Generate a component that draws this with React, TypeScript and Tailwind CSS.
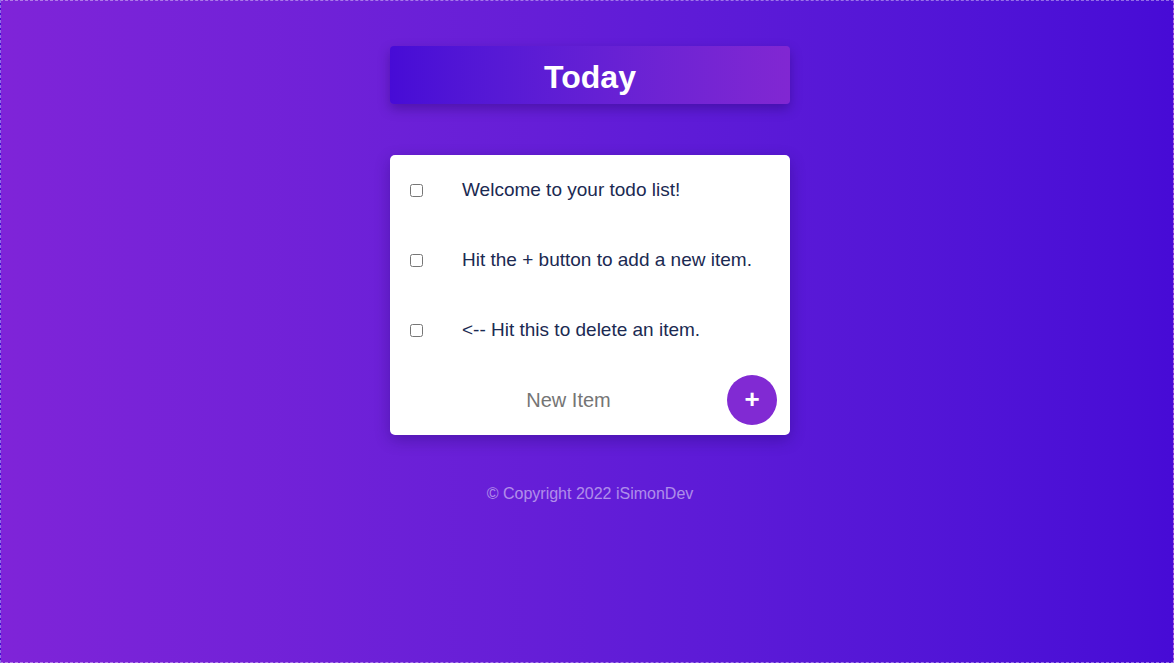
const items = [
  "Welcome to your todo list!",
  "Hit the + button to add a new item.",
  "<-- Hit this to delete an item.",
];

export default function App() {
  return (
    <div className="min-h-[663px] w-full border border-dashed border-white/40 bg-gradient-to-r from-[#7f24d8] to-[#470bd6] flex flex-col items-center pl-[6px] font-['Liberation_Sans',Arial,sans-serif]">
      <div className="mt-[45px] w-[400px] h-[58px] rounded bg-gradient-to-r from-[#470bd6] to-[#8127d2] shadow-[0_5px_12px_rgba(30,0,90,0.35)] flex items-center justify-center">
        <h1 className="text-white text-[32px] font-bold pt-[3px]">Today</h1>
      </div>

      <div className="mt-[51px] w-[400px] bg-white rounded-[5px] shadow-[0_5px_15px_rgba(20,0,80,0.3)]">
        {items.map((t) => (
          <div key={t} className="h-[70px] flex items-center">
            <div className="w-[72px] pl-[20px] flex items-center">
              <input type="checkbox" className="w-[13px] h-[13px]" />
            </div>
            <p className="text-[19px] text-[#1b2a52] font-light">{t}</p>
          </div>
        ))}
        <div className="h-[70px] flex items-center pl-[20px] pr-[13px]">
          <input
            type="text"
            placeholder="New Item"
            className="flex-1 text-center text-[20px] text-[#333] placeholder:text-[#757575] outline-none bg-transparent"
          />
          <button className="w-[50px] h-[50px] rounded-full bg-[#812ad3] text-white text-[26px] font-bold flex items-center justify-center leading-none pb-[3px]">
            +
          </button>
        </div>
      </div>

      <p className="mt-[47px] text-[16px] text-white/50">© Copyright 2022 iSimonDev</p>
    </div>
  );
}
